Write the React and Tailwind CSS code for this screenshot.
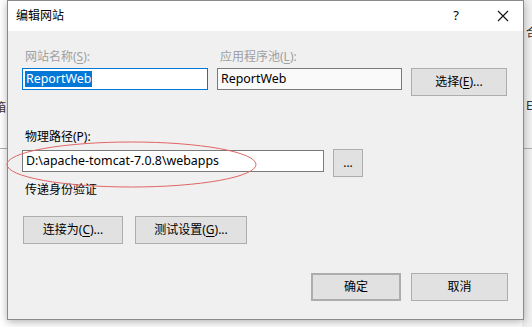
const FONT = { fontFamily: '"Noto Sans", "Noto Sans CJK SC", sans-serif' };

function Btn({ children, className = '' }) {
  return (
    <button
      className={`flex items-center justify-center h-[28px] bg-[#e1e1e1] border border-[#adadad] text-[12px] text-black leading-none ${className}`}
    >
      {children}
    </button>
  );
}

function Key({ k }) {
  return <span className="underline underline-offset-2">{k}</span>;
}

export default function App() {
  return (
    <div className="relative w-[532px] h-[327px] bg-white overflow-hidden text-[12px]" style={FONT}>
      {/* desktop behind the dialog */}
      <div className="absolute right-0 top-0 w-[10px] h-full bg-[#f0f0f0]" />
      <div className="absolute left-0 top-[148px] w-[8px] h-px bg-[#b0b0b0]" />
      <div className="absolute right-0 top-[148px] w-[10px] h-px bg-[#b0b0b0]" />
      <span className="absolute left-[-6px] top-[99px] text-[12px] text-[#333]">箱</span>
      <span className="absolute left-[526px] top-[24px] text-[12px] text-[#333]">合</span>
      <span className="absolute left-[526px] top-[97px] text-[12px] text-[#333]">E</span>

      <div className="relative flex pl-[7px]">
        <div className="w-[517px] h-[320px] flex flex-col border border-[#8a8a8a] bg-[#f0f0f0] shadow-[0_2px_8px_rgba(0,0,0,0.3)]">
          {/* title bar */}
          <div className="h-[30px] bg-white flex items-center pl-[8px] pr-[14px] shrink-0">
            <span className="text-[12px] text-black">编辑网站</span>
            <span className="ml-auto mr-[38px] text-[13px] text-black">?</span>
            <svg width="12" height="12" viewBox="0 0 12 12" className="mb-[1px]">
              <path d="M1 1 L11 11 M11 1 L1 11" stroke="#111" strokeWidth="1.1" />
            </svg>
          </div>

          {/* body */}
          <div className="flex flex-col pl-[14px] pt-[18px]">
            <div className="flex">
              <div className="w-[195px] flex flex-col">
                <span className="h-[16px] leading-[16px] pl-[3px] text-[#a0a0a0]">
                  网站名称(<Key k="S" />):
                </span>
                <div className="mt-[3px] w-[186px] h-[22px] border border-[#0078d7] bg-white flex items-center pl-[2px]">
                  <span className="bg-[#0078d7] text-white text-[12.4px] leading-[16px] px-px">ReportWeb</span>
                </div>
              </div>
              <div className="w-[194px] flex flex-col">
                <span className="h-[16px] leading-[16px] pl-[3px] text-[#a0a0a0]">
                  应用程序池(<Key k="L" />):
                </span>
                <div className="mt-[3px] w-[185px] h-[22px] border border-[#7a7a7a] bg-[#fafafa] flex items-center pl-[3px] text-[12.4px] text-black">
                  ReportWeb
                </div>
              </div>
              <Btn className="mt-[19px] w-[96px]">
                选择(<Key k="E" />)...
              </Btn>
            </div>

            <span className="mt-[33px] h-[16px] leading-[16px] pl-[3px] text-black">物理路径(P):</span>
            <div className="flex items-start mt-[4px]">
              <div className="w-[302px] h-[22px] mt-px border border-[#7a7a7a] bg-white flex items-center pl-[3px] text-[12.4px] text-black">
                D:\apache-tomcat-7.0.8\webapps
              </div>
              <Btn className="ml-[9px] w-[30px]">...</Btn>
            </div>

            <span className="mt-[5px] h-[16px] leading-[16px] pl-[3px] text-black">传递身份验证</span>

            <div className="flex mt-[18px] pl-px">
              <Btn className="w-[100px]">
                连接为(<Key k="C" />)...
              </Btn>
              <Btn className="ml-[12px] w-[112px]">
                测试设置(<Key k="G" />)...
              </Btn>
            </div>

            <div className="flex mt-[29px] pl-[289px]">
              <Btn className="w-[90px] border-2 border-[#0078d7]">确定</Btn>
              <Btn className="ml-[10px] w-[97px]">取消</Btn>
            </div>
          </div>
        </div>
      </div>

      {/* red annotation ellipse */}
      <svg className="absolute left-0 top-0 pointer-events-none" width="532" height="327">
        <ellipse cx="131.5" cy="164.5" rx="124.5" ry="22.5" fill="none" stroke="#e06666" strokeWidth="1" />
      </svg>
    </div>
  );
}
